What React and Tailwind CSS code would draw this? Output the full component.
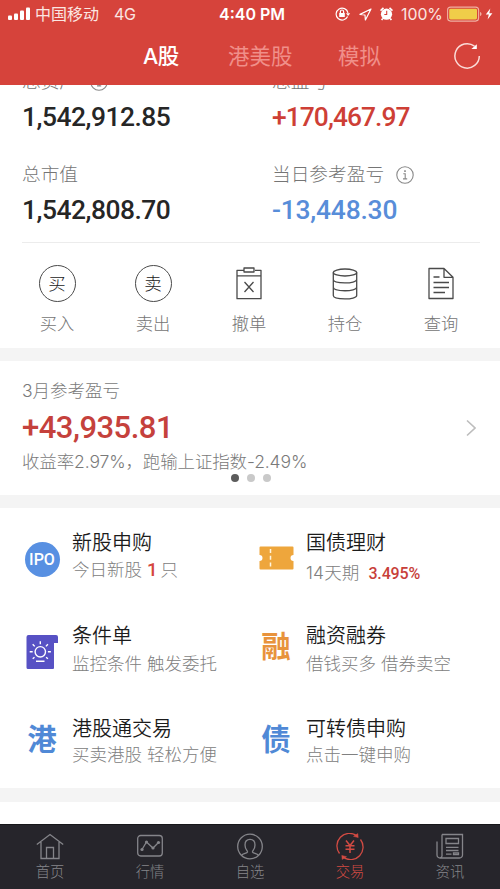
import React from "react";

const cjk = "font-[Inter,'Noto_Sans_CJK_SC',sans-serif]";
const din = "font-[Roboto,'Noto_Sans_CJK_SC',sans-serif]";

function StatusBar() {
  return (
    <div className="flex h-7 items-center pl-2 pr-1 text-[16px] leading-7 text-[#fbe6e2]">
      <svg width="23" height="14" viewBox="0 0 23 14" fill="#fff">
        <rect x="0" y="8.5" width="4" height="4.5" rx="1" />
        <rect x="6" y="6.5" width="4" height="6.5" rx="1" />
        <rect x="12" y="3.5" width="4" height="9.5" rx="1" />
        <rect x="18" y="0.5" width="4" height="12.5" rx="1" />
      </svg>
      <span className="ml-1 w-[66px] whitespace-nowrap">中国移动</span>
      <span className="ml-[13px] w-[105px] tracking-[-0.3px]">4G</span>
      <span className="w-[68px] whitespace-nowrap text-[16px] font-semibold text-white">4:40 PM</span>
      <div className="ml-[48px] flex items-center">
        <svg width="16" height="14" viewBox="0 0 16 14" fill="none" stroke="#fff" strokeWidth="1.2">
          <path d="M12.6 9.6A6 6 0 1 1 13 5.8" />
          <path d="M11 6.2h4.2L13.1 9z" fill="#fff" stroke="none" />
          <rect x="4.2" y="6" width="5.6" height="4" fill="#fff" stroke="none" />
          <path d="M5.4 6V4.6a1.6 1.6 0 0 1 3.2 0V6" />
        </svg>
        <svg className="ml-2" width="13" height="13" viewBox="0 0 13 13" fill="none" stroke="#fff" strokeWidth="1.2" strokeLinejoin="round">
          <path d="M12 1 1 6.4l5 .6.4 5z" />
        </svg>
        <svg className="ml-2" width="13" height="14" viewBox="0 0 13 14" fill="#fff">
          <circle cx="6.5" cy="7.2" r="5.6" />
          <path d="M.5 3.600 3.500.8M9.500.8l3 2.800M2.800 11.400l-1.200 1.600M10.200 11.400l1.200 1.600" stroke="#fff" strokeWidth="1.600" />
          <path d="M6.700 3.800v3.700H4.300" fill="none" stroke="#d6433b" strokeWidth="1.100" />
        </svg>
      </div>
      <span className="ml-2 w-[43px] whitespace-nowrap pt-px text-[15.800px]">100%</span>
      <svg className="ml-[3px]" width="47" height="16" viewBox="0 0 47 16">
        <rect x="0.6" y="1.1" width="31" height="14" rx="3" fill="none" stroke="#f0b0a2" strokeWidth="1.1" />
        <rect x="2.2" y="2.7" width="27.8" height="10.8" rx="1.4" fill="#f0cd49" />
        <path d="M33 6v4c2-.6 2-3.4 0-4" fill="#f0b0a2" />
        <path d="M43.3 2.6 38.8 8.6h3l-1.2 5 4.8-6.4h-3.1z" fill="#fff" />
      </svg>
    </div>
  );
}

function Header() {
  return (
    <header className="h-[85px] shrink-0 bg-[#d6433b]">
      <StatusBar />
      <div className="flex h-[56px] items-center text-[21.5px] leading-[56px] text-[#f08f89]">
        <span className="ml-[143px] w-[85px] font-medium tracking-[-0.6px] text-white">A股</span>
        <span className="w-[110px]">港美股</span>
        <span className="w-[115px]">模拟</span>
        <svg width="28" height="28" viewBox="0 0 28 28" fill="none" stroke="#fbdcd8" strokeWidth="1.5">
          <path d="M26.3 14A12.2 12.2 0 1 1 21.5 4.2" />
          <path d="M23.800 2.200v4.900h-5.400z" fill="#fff" stroke="none" />
        </svg>
      </div>
    </header>
  );
}

function Info() {
  return (
    <svg className="ml-3" width="18" height="18" viewBox="0 0 18 18" fill="none" stroke="#888" strokeWidth="1.1">
      <circle cx="9" cy="9" r="8.200" />
      <path d="M7.300 7.800h1.900v5M7 12.900h4.200" />
      <path d="M9 4.300v1.700" strokeWidth="1.600" />
    </svg>
  );
}

function Stat({ label, value, style, info }) {
  return (
    <div className="h-[93px]">
      <div className="flex h-8 items-center whitespace-nowrap text-[18.7px] font-light leading-8 text-[#757575]">
        {label}
        {info && <Info />}
      </div>
      <div className={`${din} mt-[3px] h-8 text-[26.4px] font-medium leading-8 ${style}`}>{value}</div>
    </div>
  );
}

const line = { fill: "none", stroke: "#4a4a4a", strokeWidth: 1.3, strokeLinejoin: "round" };

function CharCircle({ children }) {
  return (
    <div className="flex size-[37px] items-center justify-center rounded-full border border-[#4a4a4a] text-[17.5px] font-light leading-none text-[#222]">
      {children}
    </div>
  );
}

const actions = [
  { label: "买入", icon: <CharCircle>买</CharCircle> },
  { label: "卖出", icon: <CharCircle>卖</CharCircle> },
  {
    label: "撤单",
    icon: (
      <svg width="26" height="34" viewBox="0 0 26 34" {...line}>
        <path d="M8 3.300H1v28.400h24V3.300h-6M1 8.800h24" />
        <rect x="8" y="1" width="10" height="4" />
        <path d="m8.500 15 9 10M17.500 15l-9 10" />
      </svg>
    ),
  },
  {
    label: "持仓",
    icon: (
      <svg width="26" height="34" viewBox="0 0 26 34" {...line}>
        <ellipse cx="13" cy="5.500" rx="11.700" ry="3.500" />
        <path d="M1.300 5.500v23c0 4.600 23.400 4.600 23.400 0v-23M1.300 12.500c0 4.600 23.400 4.600 23.400 0M1.300 20.300c0 4.600 23.400 4.600 23.400 0" />
      </svg>
    ),
  },
  {
    label: "查询",
    icon: (
      <svg width="26" height="34" viewBox="0 0 26 34" {...line}>
        <path d="M1 1.500h15l9 8.800v21.200H1zM16 1.500v8.800h9M5.500 10h6M5.500 15.500h15.500M5.500 20.500h15.500M5.500 25.500h11.500" />
      </svg>
    ),
  },
];

function Summary() {
  return (
    <section className="h-[263px] shrink-0 overflow-hidden bg-white">
      <div className="-mt-[19px] grid grid-cols-2 pl-[22px] [&>*:nth-child(even)]:pl-[11px]">
        <Stat label="总资产" value="1,542,912.85" style="tracking-[-0.480px] text-[#262626]" info />
        <Stat label="总盈亏" value="+170,467.97" style="tracking-[-0.930px] text-[#ce3f36]" />
        <Stat label="总市值" value="1,542,808.70" style="tracking-[-0.480px] text-[#262626]" />
        <Stat label="当日参考盈亏" value="-13,448.30" style="tracking-[-0.200px] text-[#588dd9]" info />
      </div>
      <div className="-mt-[10px] ml-[22px] mr-5 h-px bg-[#ececec]" />
      <div className="ml-[9px] grid w-[480px] grid-cols-5 pt-[22px]">
        {actions.map((a) => (
          <div key={a.label} className="flex flex-col items-center">
            <div className="flex h-[37px] items-center">{a.icon}</div>
            <span className="mt-2.5 h-6 text-[17.3px] font-light leading-6 text-[#757575]">{a.label}</span>
          </div>
        ))}
      </div>
    </section>
  );
}

function MonthCard() {
  return (
    <section className="mt-[13px] flex h-[134px] shrink-0 flex-col bg-white pl-[22px] pr-6">
      <div className="mt-[18px] h-6 text-[17.500px] font-light leading-6 text-[#7a7a7a]">3月参考盈亏</div>
      <div className="mt-[5px] flex h-10 items-center justify-between">
        <span className={`${din} text-[31px] font-medium leading-10 tracking-[-0.500px] text-[#c5413c]`}>+43,935.81</span>
        <svg width="10" height="18" viewBox="0 0 10 18" fill="none" stroke="#bdbdbd" strokeWidth="1.600">
          <path d="m1 1.500 8 7.500-8 7.500" />
        </svg>
      </div>
      <div className="mt-px h-[25px] whitespace-nowrap text-[17.500px] font-light leading-[25px] tracking-[-0.130px] text-[#7a7a7a]">
        收益率2.97%，跑输上证指数-2.49%
      </div>
      <div className="ml-[209px] flex gap-2">
        <i className="size-2 rounded-full bg-[#5c5c5c]" />
        <i className="size-2 rounded-full bg-[#c9c9c9]" />
        <i className="size-2 rounded-full bg-[#c9c9c9]" />
      </div>
    </section>
  );
}

function IpoIcon() {
  return (
    <div className={`${din} flex size-[35px] items-center justify-center rounded-full bg-[#5890e2] pt-px text-[16px] font-medium leading-none text-white`}>
      IPO
    </div>
  );
}

function TicketIcon() {
  return (
    <svg width="35" height="24" viewBox="0 0 35 24">
      <path d="M1.500.500h32a1 1 0 0 1 1 1V9a3 3 0 0 0 0 6v7.500a1 1 0 0 1-1 1h-32a1 1 0 0 1-1-1V15a3 3 0 0 0 0-6V1.500a1 1 0 0 1 1-1z" fill="#eea63c" />
      <path d="M11.500 3v18" stroke="#fff5e0" strokeWidth="1.500" strokeDasharray="4 2.800" />
    </svg>
  );
}

function ScrollIcon() {
  return (
    <svg width="33" height="34" viewBox="0 0 33 34">
      <path d="M2.500 0h27.500a2 2 0 0 1 2 2v6h-4v25a1 1 0 0 1-1 1H2a1.500 1.500 0 0 1-1.500-1.500V2a2 2 0 0 1 2-2z" fill="#5751c4" />
      <g fill="none" stroke="#fff" strokeWidth="1.400">
        <circle cx="14.300" cy="16.800" r="5.200" />
        <path d="M14.300 6.200v3M6.700 9.200l2 2.200M21.900 9.200l-2 2.200M3.700 16.800h3M21.900 16.800h3M6.700 23.700l1.800-1.500M21.900 23.700l-1.800-1.500M10 26.300h8.500" />
      </g>
    </svg>
  );
}

function Glyph({ color, children }) {
  return <span className={`text-[29.500px] font-bold leading-[30px] ${color}`}>{children}</span>;
}

const features = [
  {
    title: "新股申购",
    sub: (
      <>
        今日新股<b className={`${din} ml-[5px] mr-[3px] text-[18.500px] font-medium text-[#d4453d]`}>1</b>只
      </>
    ),
    icon: <IpoIcon />,
    iconPos: "mt-[10px]",
    subPos: "mt-[3px]",
  },
  {
    title: "国债理财",
    sub: (
      <>
        <span className="tracking-[0.150px]">14天期</span>{" "}
        <b className={`${din} ml-1 text-[16px] font-medium tracking-[-0.150px] text-[#c83f3a]`}>3.495%</b>
      </>
    ),
    icon: <TicketIcon />,
    iconPos: "mt-[9px]",
    subPos: "mt-[6px]",
  },
  { title: "条件单", sub: "监控条件 触发委托", icon: <ScrollIcon />, iconPos: "mt-[10px]", subPos: "mt-1" },
  { title: "融资融券", sub: "借钱买多 借券卖空", icon: <Glyph color="text-[#e8933c]">融</Glyph>, iconPos: "mt-[4px]", subPos: "mt-1" },
  { title: "港股通交易", sub: "买卖港股 轻松方便", icon: <Glyph color="text-[#5089d6]">港</Glyph>, iconPos: "mt-[4px]", subPos: "mt-[2px]" },
  { title: "可转债申购", sub: "点击一键申购", icon: <Glyph color="text-[#5089d6]">债</Glyph>, iconPos: "mt-[4px]", subPos: "mt-[2px]" },
];

function Features() {
  return (
    <section className="mt-[13px] grid h-[280px] shrink-0 auto-rows-[93px] grid-cols-[234px_242px] content-start bg-white pl-6 pt-[23px]">
      {features.map((f) => (
        <div key={f.title} className="flex">
          <div className={`flex h-9 w-9 shrink-0 items-center justify-center ${f.iconPos}`}>{f.icon}</div>
          <div className="ml-3 whitespace-nowrap">
            <div className="h-6 text-[20px] font-[350] leading-6 text-[#1c1c1c]">{f.title}</div>
            <div className={`h-6 text-[17.500px] font-light leading-6 text-[#808080] ${f.subPos}`}>{f.sub}</div>
          </div>
        </div>
      ))}
    </section>
  );
}

const tabs = [
  {
    label: "首页",
    icon: <path d="M.8 11.500 14 1.500l13.200 10M5 9v16.500h18V9M10.500 25.500V14.500h7v11" />,
  },
  {
    label: "行情",
    icon: (
      <>
        <rect x="1.700" y="2.500" width="24.600" height="20.500" rx="3" />
        <path d="m6 16.500 4.500-7.500 6.500 6 5.500-5.500" />
        <g fill="currentColor" stroke="none">
          <circle cx="6" cy="16.500" r="1.600" />
          <circle cx="10.500" cy="9" r="1.600" />
          <circle cx="17" cy="15" r="1.600" />
          <circle cx="22.500" cy="9.500" r="1.600" />
        </g>
      </>
    ),
  },
  {
    label: "自选",
    icon: (
      <>
        <circle cx="14" cy="13.500" r="12.300" />
        <path d="M5.500 22.300c1.500-1.800 5.500-2 6-3.300.4-1.200-2.500-2.500-2.500-7 0-3.500 2-5.700 5-5.700s5 2.200 5 5.700c0 4.500-2.900 5.800-2.500 7 .5 1.300 4.500 1.500 6 3.300" />
      </>
    ),
  },
  {
    label: "交易",
    active: true,
    icon: (
      <>
        <path d="M20.500 2.600A12.500 12.500 0 0 0 3.500 20.500M7.500 24.400A12.500 12.500 0 0 0 24.500 6.500" />
        <path d="M17.500 3.300 21.800.600l.400 4zM10.500 23.700l-4.300 2.700-.400-4z" fill="currentColor" strokeWidth=".5" />
        <path d="m10 7.500 4 5 4-5M14 12.500v7.500M9.500 12.800h9M9.500 16.200h9" strokeWidth="1.500" />
      </>
    ),
  },
  {
    label: "资讯",
    icon: (
      <>
        <path d="M6 1.500h20.500V22a3 3 0 0 1-3 3H4a3 3 0 0 1-3-3V8.500M6 1.500V22a2.500 2.500 0 0 1-2 3" />
        <path d="M10 5.500h12.500v5H10zM10 14.300h12.500M10 17.500h12.500M10 21.200h5.500M17.500 19.800h5v1.700h-5z" />
      </>
    ),
  },
];

function TabBar() {
  return (
    <nav className="mt-auto grid h-[66px] shrink-0 grid-cols-5 border-t border-[#17171a] bg-[#26252b]">
      {tabs.map((t) => (
        <div key={t.label} className={`flex flex-col items-center pt-[8px] ${t.active ? "text-[#d24b43]" : "text-[#85858a]"}`}>
          <svg width="28" height="27" viewBox="0 0 28 27" fill="none" stroke="currentColor" strokeWidth="1.300">
            {t.icon}
          </svg>
          <span className="mt-[2px] h-5 text-[14.300px] font-light leading-5">{t.label}</span>
        </div>
      ))}
    </nav>
  );
}

export default function App() {
  return (
    <div className={`${cjk} flex h-[889px] w-[500px] flex-col overflow-hidden bg-[#f4f4f4]`}>
      <Header />
      <Summary />
      <MonthCard />
      <Features />
      <section className="mt-[14px] h-[22px] shrink-0 bg-white" />
      <TabBar />
    </div>
  );
}
